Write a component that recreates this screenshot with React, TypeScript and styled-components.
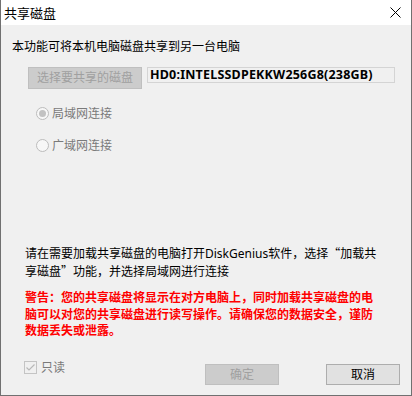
import React from 'react';
import styled, { createGlobalStyle } from 'styled-components';

const GlobalStyle = createGlobalStyle`
  html, body {
    margin: 0;
    padding: 0;
    background: #ffffff;
  }
  * {
    box-sizing: border-box;
  }
`;

const FONT = `"Noto Sans", "Noto Sans CJK SC", sans-serif`;
const CJK = `"Noto Sans CJK SC", sans-serif`;

const Window = styled.div`
  width: 412px;
  height: 396px;
  display: flex;
  flex-direction: column;
  background: #f0f0f0;
  border-left: 1px solid #707070;
  border-right: 1px solid #707070;
  border-bottom: 1px solid #707070;
  font-family: ${FONT};
  font-size: 12px;
  color: #000;
`;

const TitleBar = styled.div`
  height: 25px;
  flex: none;
  background: #ffffff;
  display: flex;
  align-items: center;
  justify-content: space-between;
  padding: 0 10px 0 3px;
`;

const Title = styled.span`
  font-size: 13px;
  line-height: 16px;
  margin-top: 1px;
`;

const Body = styled.div`
  flex: 1;
  display: flex;
  flex-direction: column;
  padding: 0 11px 7px 11px;
`;

const Intro = styled.div`
  margin-top: 14px;
  line-height: 16px;
  height: 16px;
`;

const PickRow = styled.div`
  margin-top: 12px;
  margin-left: 16px;
  display: flex;
  align-items: flex-start;
  gap: 5px;
`;

const WinButton = styled.button<{ $disabled?: boolean; $w: number }>`
  width: ${p => p.$w}px;
  height: ${p => (p.$w > 100 ? 22 : 21)}px;
  padding: 0;
  font-family: ${FONT};
  font-size: 12px;
  line-height: 16px;
  background: ${p => (p.$disabled ? '#cccccc' : '#e1e1e1')};
  border: 1px solid ${p => (p.$disabled ? '#bfbfbf' : '#adadad')};
  color: ${p => (p.$disabled ? '#a0a0a0' : '#000000')};
  border-radius: 0;
`;

const DiskField = styled.div`
  width: 248px;
  height: 16px;
  border: 1px solid #d4d4d4;
  background: #f0f0f0;
  font-weight: 700;
  font-size: 12.5px;
  letter-spacing: 0.2px;
  line-height: 14px;
  padding-left: 2px;
  white-space: nowrap;
  overflow: hidden;
`;

const OptionRow = styled.div<{ $top: number }>`
  margin-top: ${p => p.$top}px;
  margin-left: 24px;
  display: flex;
  align-items: center;
  height: 16px;
  gap: 3px;
  color: #7a7a7a;
`;

const Radio = styled.span<{ $checked?: boolean }>`
  width: 13px;
  height: 13px;
  border-radius: 50%;
  border: 1px solid #bcbcbc;
  background: #f7f7f7;
  display: flex;
  align-items: center;
  justify-content: center;
  &::after {
    content: '';
    display: ${p => (p.$checked ? 'block' : 'none')};
    width: 7px;
    height: 7px;
    border-radius: 50%;
    background: #c2c2c2;
  }
`;

const Note = styled.div<{ $warn?: boolean }>`
  margin-left: 13px;
  line-height: ${p => (p.$warn ? '16.5px' : '17px')};
  margin-top: ${p => (p.$warn ? '10px' : '91px')};
  color: ${p => (p.$warn ? '#ff0000' : '#000000')};
  font-weight: ${p => (p.$warn ? 700 : 400)};
  white-space: nowrap;
`;

const Quote = styled.span`
  font-family: ${CJK};
`;

const Footer = styled.div`
  margin-top: auto;
  display: flex;
  align-items: flex-start;
  height: 24px;
`;

const ReadOnly = styled.div`
  margin-left: 12px;
  margin-top: -3px;
  display: flex;
  align-items: center;
  gap: 4px;
  color: #7a7a7a;
  line-height: 13px;
`;

const CheckBox = styled.span`
  width: 13px;
  height: 13px;
  border: 1px solid #c4c4c4;
  display: flex;
  align-items: center;
  justify-content: center;
`;

const Buttons = styled.div`
  margin-left: auto;
  display: flex;
  gap: 47px;
`;

export default function App() {
  return (
    <>
      <GlobalStyle />
      <Window>
        <TitleBar>
          <Title>共享磁盘</Title>
          <svg width="11" height="11" viewBox="0 0 11 11">
            <path d="M0.5 0.5 L10.5 10.5 M10.5 0.5 L0.5 10.5" stroke="#000" strokeWidth="1" fill="none" />
          </svg>
        </TitleBar>
        <Body>
          <Intro>本功能可将本机电脑磁盘共享到另一台电脑</Intro>
          <PickRow>
            <WinButton $disabled $w={114}>选择要共享的磁盘</WinButton>
            <DiskField>HD0:INTELSSDPEKKW256G8(238GB)</DiskField>
          </PickRow>
          <OptionRow $top={16}>
            <Radio $checked />
            局域网连接
          </OptionRow>
          <OptionRow $top={16}>
            <Radio />
            广域网连接
          </OptionRow>
          <Note>
            请在需要加载共享磁盘的电脑打开DiskGenius软件，选择<Quote>“</Quote>加载共
            <br />
            享磁盘<Quote>”</Quote>功能，并选择局域网进行连接
          </Note>
          <Note $warn>
            警告：您的共享磁盘将显示在对方电脑上，同时加载共享磁盘的电
            <br />
            脑可以对您的共享磁盘进行读写操作。请确保您的数据安全，谨防
            <br />
            数据丢失或泄露。
          </Note>
          <Footer>
            <ReadOnly>
              <CheckBox>
                <svg width="11" height="11" viewBox="0 0 11 11">
                  <path d="M1.5 5.5 L4 8 L9.5 2.5" stroke="#b8b8b8" strokeWidth="1.2" fill="none" />
                </svg>
              </CheckBox>
              只读
            </ReadOnly>
            <Buttons>
              <WinButton $disabled $w={74}>确定</WinButton>
              <WinButton $w={74}>取消</WinButton>
            </Buttons>
          </Footer>
        </Body>
      </Window>
    </>
  );
}
